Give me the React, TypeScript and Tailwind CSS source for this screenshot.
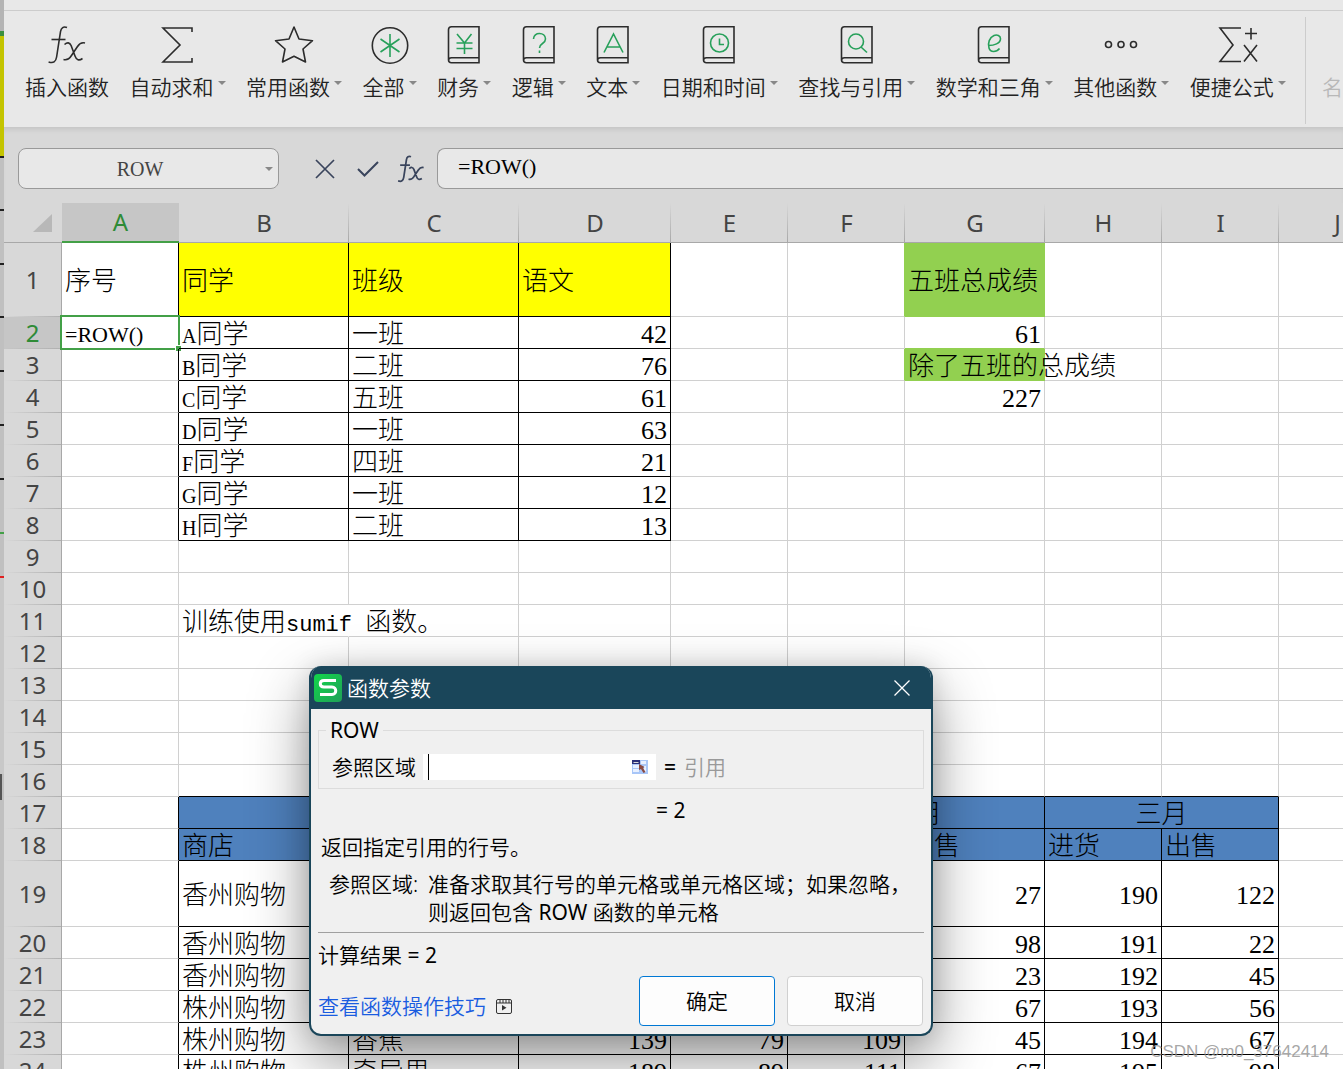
import type { ReactNode } from 'react'

type Cell = {
  text?: string
  kind?: 'text' | 'num' | 'center'
  fill?: 'yellow' | 'green' | 'blue'
  span?: number
}

type Row = {
  n: number
  size?: 'tall' | 'mid'
  cells: Record<string, Cell>
}

const SANS = "font-['Noto_Sans','Noto_Sans_CJK_SC',sans-serif]"
const CELL_FONT = "font-['Liberation_Serif','Noto_Sans_CJK_SC',serif]"
const MONO = "font-['Liberation_Mono','Noto_Sans_CJK_SC',monospace]"

const COLUMNS = [
  { id: 'A', width: 'w-[117px]' },
  { id: 'B', width: 'w-[170px]' },
  { id: 'C', width: 'w-[170px]' },
  { id: 'D', width: 'w-[152px]' },
  { id: 'E', width: 'w-[117px]' },
  { id: 'F', width: 'w-[117px]' },
  { id: 'G', width: 'w-[140px]' },
  { id: 'H', width: 'w-[117px]' },
  { id: 'I', width: 'w-[117px]' },
  { id: 'J', width: 'w-[117px]' },
]

const student = (n: number, name: string, group: string, score: string, extra: Record<string, Cell> = {}): Row => ({
  n,
  cells: { B: { text: name }, C: { text: group }, D: { text: score, kind: 'num' }, ...extra },
})

const num = (text: string): Cell => ({ text, kind: 'num' })

const ROWS: Row[] = [
  {
    n: 1,
    size: 'tall',
    cells: {
      A: { text: '序号' },
      B: { text: '同学', fill: 'yellow' },
      C: { text: '班级', fill: 'yellow' },
      D: { text: '语文', fill: 'yellow' },
      G: { text: '五班总成绩', fill: 'green' },
    },
  },
  student(2, 'A同学', '一班', '42', { G: num('61') }),
  student(3, 'B同学', '二班', '76', { G: { text: '除了五班的总成绩', fill: 'green' } }),
  student(4, 'C同学', '五班', '61', { G: num('227') }),
  student(5, 'D同学', '一班', '63'),
  student(6, 'F同学', '四班', '21'),
  student(7, 'G同学', '一班', '12'),
  student(8, 'H同学', '二班', '13'),
  { n: 9, cells: {} },
  { n: 10, cells: {} },
  { n: 11, cells: { B: { text: '训练使用sumif 函数。' } } },
  { n: 12, cells: {} },
  { n: 13, cells: {} },
  { n: 14, cells: {} },
  { n: 15, cells: {} },
  { n: 16, cells: {} },
  {
    n: 17,
    cells: {
      B: { fill: 'blue', span: 2 },
      D: { fill: 'blue', span: 2 },
      F: { text: '二月', kind: 'center', fill: 'blue', span: 2 },
      H: { text: '三月', kind: 'center', fill: 'blue', span: 2 },
    },
  },
  {
    n: 18,
    cells: {
      B: { text: '商店', fill: 'blue' },
      C: { fill: 'blue' },
      D: { fill: 'blue' },
      E: { fill: 'blue' },
      F: { fill: 'blue' },
      G: { text: '出售', fill: 'blue' },
      H: { text: '进货', fill: 'blue' },
      I: { text: '出售', fill: 'blue' },
    },
  },
  { n: 19, size: 'mid', cells: { B: { text: '香州购物' }, G: num('27'), H: num('190'), I: num('122') } },
  { n: 20, cells: { B: { text: '香州购物' }, G: num('98'), H: num('191'), I: num('22') } },
  { n: 21, cells: { B: { text: '香州购物' }, G: num('23'), H: num('192'), I: num('45') } },
  { n: 22, cells: { B: { text: '株州购物' }, G: num('67'), H: num('193'), I: num('56') } },
  {
    n: 23,
    cells: {
      B: { text: '株州购物' },
      C: { text: '香蕉' },
      D: num('139'),
      E: num('79'),
      F: num('109'),
      G: num('45'),
      H: num('194'),
      I: num('67'),
    },
  },
  {
    n: 24,
    cells: {
      B: { text: '株州购物' },
      C: { text: '奇异果' },
      D: num('189'),
      E: num('89'),
      F: num('111'),
      G: num('67'),
      H: num('195'),
      I: num('98'),
    },
  },
]

// Black rules surround B1:D8 and B17:I24, everything else keeps the grid colour.
function inRange(col: number, row: number) {
  return (col >= 1 && col <= 3 && row >= 1 && row <= 8) || (col >= 1 && col <= 8 && row >= 17)
}

function isGreen(col: number, row: number) {
  return col === 6 && (row === 1 || row === 3)
}

function rightBorder(col: number, row: number) {
  if (inRange(col, row) || inRange(col + 1, row)) return 'border-r-black'
  if (isGreen(col, row) || isGreen(col + 1, row)) return 'border-r-[#92d050]'
  if (row === 11 && col === 1) return 'border-r-white'
  return 'border-r-[#d0d0d0]'
}

function bottomBorder(col: number, row: number) {
  if (inRange(col, row) || inRange(col, row + 1)) return 'border-b-black'
  if (isGreen(col, row) || isGreen(col, row + 1)) return 'border-b-[#92d050]'
  return 'border-b-[#d0d0d0]'
}

const FILLS = { yellow: 'bg-[#ffff00]', green: 'bg-[#92d050]', blue: 'bg-[#4f81bd]' }
const ALIGN = { text: 'text-left pl-[3px]', num: 'text-right pr-[3px]', center: 'text-center' }

function CellText({ text }: { text: string }) {
  // Latin letters are kept close to half the width of a Chinese one.
  return (
    <>
      {text.split(/([A-Z]+|[a-z ]+)/).map((part, i) => {
        if (/[A-Z]/.test(part)) {
          return <span key={i} className="text-[20px] leading-none">{part}</span>
        }
        if (/[a-z ]/.test(part)) {
          return <span key={i} className={`${MONO} text-[22px] leading-[14px] whitespace-pre`}>{part}</span>
        }
        return part
      })}
    </>
  )
}

function GridRow({ row }: { row: Row }) {
  const active = row.n === 2
  const height = row.size === 'tall' ? 'h-[74px]' : row.size === 'mid' ? 'h-[66px]' : 'h-8'
  const cells: ReactNode[] = []

  for (let c = 0; c < COLUMNS.length; c++) {
    const cell = row.cells[COLUMNS[c].id] ?? {}
    const span = cell.span ?? 1
    const last = c + span - 1
    cells.push(
      <td
        key={COLUMNS[c].id}
        colSpan={span}
        className={`relative p-0 pt-[3px] border-r border-b leading-[27px] whitespace-nowrap ${ALIGN[cell.kind ?? 'text']} ${
          cell.fill ? FILLS[cell.fill] : ''
        } ${rightBorder(last, row.n)} ${bottomBorder(c, row.n)}`}
      >
        {active && c === 0 ? (
          <>
            <input
              aria-label="A2"
              defaultValue="=ROW()"
              className="block w-full h-[27px] bg-transparent outline-none text-[22px]"
            />
            <span className="absolute -inset-[2px] border-2 border-[#43a047] pointer-events-none" />
            <span className="absolute -right-[3px] -bottom-[3px] size-[5px] bg-[#43a047] outline-1 outline-white" />
          </>
        ) : (
          cell.text && (
            <span className="relative z-[1]">
              <CellText text={cell.text} />
            </span>
          )
        )}
      </td>,
    )
    c = last
  }

  return (
    <tr className={height}>
      <th
        scope="row"
        className={`p-0 border-r border-[#a8a8a8] ${SANS} text-[24px] leading-[28px] font-normal bg-[linear-gradient(to_right,transparent,#b0b0b0)] bg-bottom bg-no-repeat bg-[length:100%_1px] ${
          active ? 'bg-[#c6c6c6] text-[#2e8b36]' : 'bg-[#d8d8d8] text-[#444444]'
        }`}
      >
        {row.n}
      </th>
      {cells}
    </tr>
  )
}

function Sheet() {
  return (
    <table className={`table-fixed w-[1292px] border-separate border-spacing-0 bg-white text-black text-[26px] font-light ${CELL_FONT}`}>
      <colgroup>
        <col className="w-[58px]" />
        {COLUMNS.map((c) => (
          <col key={c.id} className={c.width} />
        ))}
      </colgroup>
      <thead>
        <tr className="h-10 bg-[#d8d8d8]">
          <th className="p-0 border-b border-[#a8a8a8]" aria-label="全选">
            <svg width="20" height="20" viewBox="0 0 20 20" className="ml-auto mr-[9px]">
              <path d="M19 1v18H0z" fill="#b8b8b8" />
            </svg>
          </th>
          {COLUMNS.map((c) => (
            <th
              key={c.id}
              scope="col"
              className={`p-0 ${SANS} text-[24px] leading-[28px] font-normal ${
                c.id === 'A'
                  ? 'bg-[#c6c6c6] text-[#2e8b36] border-b-2 border-[#43a047]'
                  : 'text-[#444444] border-b border-[#a8a8a8] bg-[linear-gradient(to_bottom,transparent,#a8a8a8)] bg-right bg-no-repeat bg-[length:1px_100%]'
              }`}
            >
              {c.id}
            </th>
          ))}
        </tr>
      </thead>
      <tbody>
        {ROWS.map((row) => (
          <GridRow key={row.n} row={row} />
        ))}
      </tbody>
    </table>
  )
}

/* Ribbon icons */

function Icon({ children }: { children: ReactNode }) {
  return (
    <svg width="40" height="40" viewBox="0 0 40 40" fill="none" stroke="#2c2c2c" strokeWidth="1.6">
      {children}
    </svg>
  )
}

function FxShape() {
  return (
    <>
      <path d="M20 2.600c-3.500-1.600-5.800.3-6.500 4L9.600 32c-.8 5-3.200 6.500-8 5" />
      <path d="M4.500 14.500h14" />
      <path d="M17.500 19.500c2.800-2.500 5.200-2.200 6.600 1l3.900 10.500c1.400 4 4 5 7.500 2.500M38 18c-3.500-1-5.500.5-7.500 3.500l-6 9c-2.200 3.500-4.200 5-8 4" />
    </>
  )
}

function BookIcon({ children }: { children: ReactNode }) {
  return (
    <Icon>
      <path d="M35 1.800H7.500c-2 0-3 1-3 3v30c0 2 1 3 3 3H35zM4.500 35.500c0-2 1-2.700 3-2.700H35" />
      <g stroke="#27a05a">{children}</g>
    </Icon>
  )
}

const TOOLS: { label: string; menu: boolean; icon: ReactNode }[] = [
  { label: '插入函数', menu: false, icon: <Icon><FxShape /></Icon> },
  {
    label: '自动求和',
    menu: true,
    icon: (
      <Icon>
        <path d="M34 7V3H5l17 17L5 37h29v-4" />
      </Icon>
    ),
  },
  {
    label: '常用函数',
    menu: true,
    icon: (
      <Icon>
        <path strokeLinejoin="round" d="M20 2l5 12L38.500 15.700l-9.500 8.300L31.500 37 20 31.300 8.500 37l2.500-13L1.500 15.700 15 14z" />
      </Icon>
    ),
  },
  {
    label: '全部',
    menu: true,
    icon: (
      <Icon>
        <circle cx="20" cy="20.500" r="17.700" />
        <path stroke="#27a05a" d="M20 9v23M10.500 14l19 13M29.500 14l-19 13" />
      </Icon>
    ),
  },
  { label: '财务', menu: true, icon: <BookIcon><path d="M13 9l7.500 9 7-9M12.500 18h16M12.500 23.500h16M20.500 18v11" /></BookIcon> },
  {
    label: '逻辑',
    menu: true,
    icon: (
      <BookIcon>
        <path d="M14.500 14c0-7.500 12-7 12 0 0 5-6 4-6 9M20.500 25.500v2.500" />
      </BookIcon>
    ),
  },
  { label: '文本', menu: true, icon: <BookIcon><path d="M11 27.500L20.500 9 30 27.500M14 22h13" /></BookIcon> },
  {
    label: '日期和时间',
    menu: true,
    icon: (
      <BookIcon>
        <circle cx="20.500" cy="18" r="9" />
        <path d="M20.500 13.500V19.500H25" />
      </BookIcon>
    ),
  },
  {
    label: '查找与引用',
    menu: true,
    icon: (
      <BookIcon>
        <circle cx="19" cy="16.500" r="7.500" />
        <path d="M24 22l6 5.500" />
      </BookIcon>
    ),
  },
  {
    label: '数学和三角',
    menu: true,
    icon: (
      <BookIcon>
        <path d="M14.500 20.500c5.500 0 12-2 12-6.800 0-3-3.500-4.500-6.500-3.200C15.500 12.500 13.500 18 15 23c1.400 4.800 7.500 4.200 10.500.5" />
      </BookIcon>
    ),
  },
  {
    label: '其他函数',
    menu: true,
    icon: (
      <Icon>
        <circle cx="7.500" cy="19.500" r="3" />
        <circle cx="20" cy="19.500" r="3" />
        <circle cx="32.500" cy="19.500" r="3" />
      </Icon>
    ),
  },
  {
    label: '便捷公式',
    menu: true,
    icon: (
      <Icon>
        <path d="M23 3H2l13 17L2 36.500h21M33 3v11.500M27 8.500h12M26 20l13 16.500M39 20L26 36.500" />
      </Icon>
    ),
  },
]

function Caret() {
  return (
    <svg width="8" height="4" viewBox="0 0 8 4" aria-hidden="true">
      <path d="M0 0h8L4 4z" fill="#888888" />
    </svg>
  )
}

function Ribbon() {
  return (
    <div className="h-[117px] shrink-0 flex bg-[#e8e8e8] border-b border-[#c8c8c8] pt-[14px] pl-[21px] overflow-hidden">
      <div className="flex w-[1261px] shrink-0 items-start justify-between">
        {TOOLS.map((tool) => (
          <button key={tool.label} type="button" className="flex flex-col items-center text-[21px] leading-[28px] font-[350] text-[#222222]">
            {tool.icon}
            <span className="mt-2 flex gap-1 whitespace-nowrap">
              {tool.label}
              {tool.menu && (
                <span className="flex pt-2">
                  <Caret />
                </span>
              )}
            </span>
          </button>
        ))}
      </div>
      <div className="ml-[19px] -mt-2 h-[107px] w-px shrink-0 bg-[#cccccc]" />
      <button type="button" disabled className="ml-4 mt-12 shrink-0 self-start whitespace-nowrap text-[21px] leading-[28px] font-[350] text-[#b8b8b8]">
        名称
      </button>
    </div>
  )
}

function FormulaBar() {
  return (
    <div className={`h-[75px] shrink-0 flex pt-5 pl-[14px] bg-[#d8d8d8] shadow-[inset_0_4px_4px_-2px_rgba(0,0,0,0.08)] ${CELL_FONT}`}>
      <div className="w-[261px] h-[41px] shrink-0 flex items-center rounded-lg border border-[#999999] bg-[#e8e8e8] pr-[5px] text-[20px] text-[#444444]">
        <input aria-label="名称框" defaultValue="ROW" className="min-w-0 flex-1 bg-transparent pr-1 text-center outline-none" />
        <button type="button" aria-label="展开名称">
          <Caret />
        </button>
      </div>
      <div className="flex h-[41px] shrink-0 items-center gap-[15px] pl-8 pr-3">
        <button type="button" aria-label="取消输入" className="flex w-7 justify-center">
          <svg width="20" height="20" viewBox="0 0 20 20" fill="none" stroke="#39445c" strokeWidth="1.700">
            <path d="M1 1l18 18M19 1L1 19" />
          </svg>
        </button>
        <button type="button" aria-label="确认输入" className="flex w-7 justify-center">
          <svg width="22" height="20" viewBox="0 0 22 20" fill="none" stroke="#39445c" strokeWidth="2">
            <path d="M1 10l6.500 6.500L21 3" />
          </svg>
        </button>
        <button type="button" aria-label="编辑函数" className="flex w-7 justify-center">
          <svg width="28" height="28" viewBox="0 0 40 40" fill="none" stroke="#39445c" strokeWidth="2.500">
            <FxShape />
          </svg>
        </button>
      </div>
      <input
        aria-label="编辑栏"
        defaultValue="=ROW()"
        className="h-[41px] min-w-0 flex-1 rounded-l-lg border border-r-0 border-[#999999] bg-[#e8e8e8] pl-5 pb-1 text-[22px] text-black outline-none"
      />
    </div>
  )
}

function ArgumentsDialog() {
  return (
    <div
      role="dialog"
      aria-labelledby="dialog-title"
      className="absolute left-[309px] top-[666px] z-10 w-[624px] overflow-hidden rounded-xl border-2 border-t-0 border-[#1a465a] bg-[#f0f0f0] text-[21px] leading-[28px] font-[350] text-black shadow-[0_24px_60px_rgba(0,0,0,0.42),0_0_24px_rgba(0,0,0,0.12)]"
    >
      <div className="flex h-[43px] items-center bg-[#1a465a] pl-[3px] pr-[21px] text-white">
        <svg width="28" height="28" viewBox="0 0 28 28">
          <defs>
            <linearGradient id="logo-fill" x1="0" y1="0" x2="1" y2="1">
              <stop offset="0" stopColor="#12d64a" />
              <stop offset="1" stopColor="#20a058" />
            </linearGradient>
          </defs>
          <rect width="28" height="28" rx="4" fill="url(#logo-fill)" />
          <path d="M22 6.500H10c-5 0-5 6.500 0 6.500h8c5 0 5 7.500 0 7.500H6" fill="none" stroke="#ffffff" strokeWidth="3" />
        </svg>
        <h2 id="dialog-title" className="ml-[5px] flex-1">函数参数</h2>
        <button type="button" aria-label="关闭">
          <svg width="16" height="16" viewBox="0 0 16 16" fill="none" stroke="#ffffff" strokeWidth="1.300">
            <path d="M.5.5l15 15M15.500.5l-15 15" />
          </svg>
        </button>
      </div>

      <div className="px-[7px] pt-[7px] pb-2">
        <fieldset className="h-[73px] border border-[#dcdcdc] pl-[13px]">
          <legend className="-ml-[6px] px-1 font-normal">ROW</legend>
          <div className="flex items-center pt-[9px]">
            <label htmlFor="arg-ref">参照区域</label>
            <div className="ml-[7px] flex h-[26px] w-[233px] items-center bg-white pr-2">
              <span className="ml-[5px] h-[26px] w-px bg-black" />
              <input id="arg-ref" className="min-w-0 flex-1 bg-transparent outline-none" />
              <button type="button" aria-label="选择区域">
                <svg width="16" height="14" viewBox="0 0 16 14">
                  <path d="M0 0h16v14H0z" fill="#a8c6f8" />
                  <path d="M1 5h6v3H1zM1 9h6v3H1zM9 1h5v3H9zM12 6h2v6h-2z" fill="#e8f0ff" />
                  <path d="M0 0h8v4H0z" fill="#2b2f78" />
                  <path d="M1.500 2.500h5" stroke="#d8d8d8" />
                  <path d="M7 4l5.500 3-1.500 1 2.500 4-2 1-2.500-4-2 1z" fill="#8a4a42" />
                </svg>
              </button>
            </div>
            <span className="ml-2 font-medium">=</span>
            <span className="ml-2 text-[#999999]">引用</span>
          </div>
        </fieldset>

        <p className="mt-[7px] pl-[338px] font-normal">= 2</p>
        <p className="mt-[9px] pl-[3px]">返回指定引用的行号。</p>
        <dl className="mt-[9px] flex pl-[11px]">
          <dt className="w-[99px] shrink-0 whitespace-nowrap">参照区域:</dt>
          <dd className="whitespace-nowrap">
            准备求取其行号的单元格或单元格区域；如果忽略，
            <br />
            则返回包含 <span className="font-normal">ROW</span> 函数的单元格
          </dd>
        </dl>
        <hr className="mt-[6px] border-[#a0a0a0]" />
        <p className="mt-2">
          计算结果 <span className="font-normal">= 2</span>
        </p>

        <div className="mt-[7px] flex items-center">
          <div className="flex items-center gap-[10px] pt-[10px]">
            <a href="#tips" className="text-[#1a5ce0]">查看函数操作技巧</a>
            <svg width="16" height="15" viewBox="0 0 16 15" fill="none" stroke="#333333">
              <rect x=".5" y=".5" width="15" height="14" rx="1.500" />
              <path d="M.5 4h15M4 .5V4M7 .5V4M10 .5V4M13 .5V4" />
              <path d="M6 6l4.500 2.800L6 11.500z" fill="#333333" stroke="none" />
            </svg>
          </div>
          <div className="ml-auto flex gap-3 pr-px">
            <button type="button" className="h-[50px] w-[136px] rounded border border-[#0078d4] bg-[#fdfdfd]">确定</button>
            <button type="button" className="h-[50px] w-[136px] rounded border border-[#d0d0d0] bg-[#fdfdfd]">取消</button>
          </div>
        </div>
      </div>
    </div>
  )
}

// Sliver of the workbook that lies behind the window.
function BackWindow() {
  return (
    <div className="w-1 shrink-0 flex flex-col bg-[#c0c0c0]">
      <div className="h-[31px] bg-[#b4b4b4]" />
      <div className="h-[5px] bg-[#3c9040]" />
      <div className="h-[120px] bg-[#c4c400]" />
      <div className="h-[2px] bg-[#202020]" />
      <div className="h-[53px] border-b-2 border-[#202020]" />
      <div className="h-[54px] border-b-2 border-[#202020]" />
      <div className="h-[53px] border-b-2 border-[#202020]" />
      <div className="h-[54px] border-b-2 border-[#202020]" />
      <div className="h-[54px] border-b-2 border-[#202020]" />
      <div className="h-[54px] border-b-2 border-[#202020]" />
      <div className="h-[54px] border-b-2 border-[#43a047]" />
      <div className="h-[44px] border-b-2 border-[#e02020]" />
      <div className="h-[196px] bg-[#c8c8c8]" />
      <div className="h-[26px] w-[2px] bg-[#555555]" />
    </div>
  )
}

export default function App() {
  return (
    <div className={`relative flex h-screen overflow-hidden bg-white ${SANS}`}>
      <BackWindow />
      <main className="flex min-w-0 flex-1 flex-col overflow-hidden">
        <div className="h-[11px] shrink-0 border-b border-[#cccccc] bg-[#e8e8e8]" />
        <Ribbon />
        <FormulaBar />
        <Sheet />
      </main>
      <ArgumentsDialog />
      <span className="absolute right-[14px] bottom-[7px] z-20 font-['Liberation_Sans',sans-serif] text-[17px] leading-[20px] text-[#909090]/80">
        CSDN @m0_37642414
      </span>
    </div>
  )
}
